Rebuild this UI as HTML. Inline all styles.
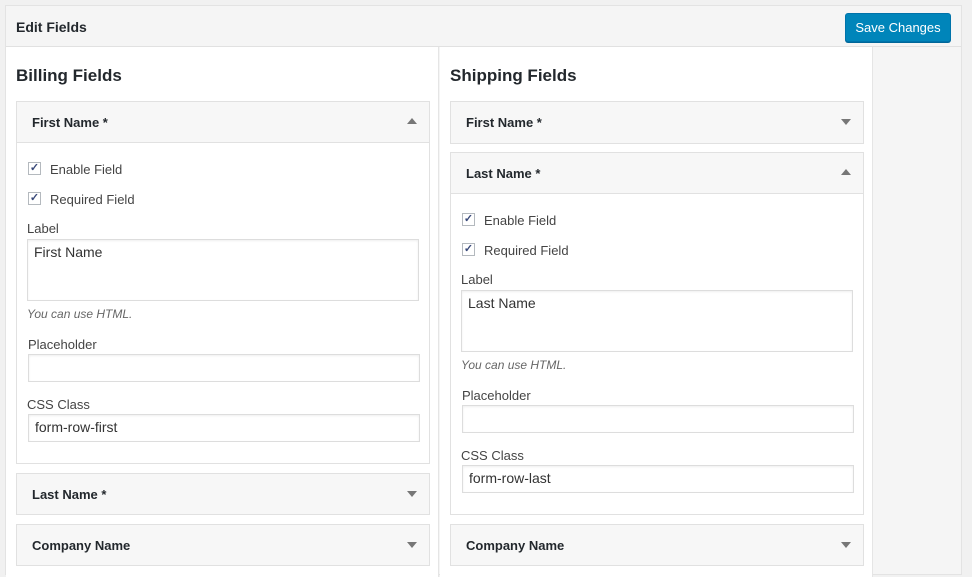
<!DOCTYPE html>
<html><head><style>
*{box-sizing:border-box;margin:0;padding:0}
body{width:972px;height:571px;overflow:hidden;background:#f1f1f1;font-family:"Liberation Sans",sans-serif;color:#23282d;position:relative}
.a{position:absolute}
.panel{left:5px;top:5px;width:957px;height:570px;border:1px solid #e3e3e3;background:#f5f5f5}
.hdr{left:6px;top:6px;width:955px;height:41px;background:#f5f5f5;border-bottom:1px solid #e1e1e1}
.col{top:47px;height:530px;background:#fff}
h2{position:absolute;font-size:17px;font-weight:bold;color:#23282d}
.box{position:absolute;border:1px solid #e1e1e1;background:#fff}
.bh{height:40px;background:#f7f7f7;font-size:13px;font-weight:bold;padding:13px 0 0 15px;position:relative}
.open .bh{border-bottom:1px solid #e1e1e1;height:41px}
.tri{position:absolute;right:12px;top:17px;width:0;height:0;border-left:5px solid transparent;border-right:5px solid transparent}
.dn{border-top:6px solid #777}
.up{border-bottom:6px solid #777;top:16px}
.t{position:absolute;font-size:13px;color:#444}
.cb{position:absolute;width:13px;height:13px;border:1px solid #b4b9be;background:#fff;font-size:11px;line-height:11px;text-align:center;color:#3a4a7a;font-weight:bold}
.inp{position:absolute;border:1px solid #ddd;background:#fff;box-shadow:inset 0 1px 2px rgba(0,0,0,.07);font-size:14px;color:#333;padding:4px 6px}
.i{font-style:italic;color:#666;font-size:12px}
.btn{left:845px;top:13px;width:106px;height:29px;background:#0085ba;border:1px solid #0073aa;border-radius:3px;color:#fff;font-size:13px;text-align:center;line-height:27px;box-shadow:0 1px 0 #006799}
</style></head><body>
<div class="a panel"></div>
<div class="a hdr"></div>
<div class="a" style="left:16px;top:19px;font-size:14px;font-weight:bold">Edit Fields</div>
<div class="a btn">Save Changes</div>
<div class="a col" style="left:6px;width:433px;border-right:1px solid #e5e5e5"></div>
<div class="a col" style="left:440px;width:433px;border-right:1px solid #e5e5e5"></div>

<h2 style="left:16px;top:66px">Billing Fields</h2>
<h2 style="left:450px;top:66px">Shipping Fields</h2>

<!-- billing -->
<div class="box open" style="left:16px;top:101px;width:414px;height:363px"><div class="bh">First Name *<span class="tri up"></span></div></div>
<div class="cb" style="left:28px;top:162px">✓</div><div class="t" style="left:50px;top:162px">Enable Field</div>
<div class="cb" style="left:28px;top:192px">✓</div><div class="t" style="left:50px;top:192px">Required Field</div>
<div class="t" style="left:27px;top:221px">Label</div>
<div class="inp" style="left:27px;top:239px;width:392px;height:62px">First Name</div>
<div class="t i" style="left:27px;top:307px">You can use HTML.</div>
<div class="t" style="left:28px;top:337px">Placeholder</div>
<div class="inp" style="left:28px;top:354px;width:392px;height:28px"></div>
<div class="t" style="left:27px;top:397px">CSS Class</div>
<div class="inp" style="left:28px;top:414px;width:392px;height:28px">form-row-first</div>
<div class="box" style="left:16px;top:473px;width:414px;height:42px"><div class="bh">Last Name *<span class="tri dn"></span></div></div>
<div class="box" style="left:16px;top:524px;width:414px;height:42px"><div class="bh">Company Name<span class="tri dn"></span></div></div>

<!-- shipping -->
<div class="box" style="left:450px;top:101px;width:414px;height:43px"><div class="bh" style="height:41px">First Name *<span class="tri dn"></span></div></div>
<div class="box open" style="left:450px;top:152px;width:414px;height:363px"><div class="bh">Last Name *<span class="tri up"></span></div></div>
<div class="cb" style="left:462px;top:213px">✓</div><div class="t" style="left:484px;top:213px">Enable Field</div>
<div class="cb" style="left:462px;top:243px">✓</div><div class="t" style="left:484px;top:243px">Required Field</div>
<div class="t" style="left:461px;top:272px">Label</div>
<div class="inp" style="left:461px;top:290px;width:392px;height:62px">Last Name</div>
<div class="t i" style="left:461px;top:358px">You can use HTML.</div>
<div class="t" style="left:462px;top:388px">Placeholder</div>
<div class="inp" style="left:462px;top:405px;width:392px;height:28px"></div>
<div class="t" style="left:461px;top:448px">CSS Class</div>
<div class="inp" style="left:462px;top:465px;width:392px;height:28px">form-row-last</div>
<div class="box" style="left:450px;top:524px;width:414px;height:42px"><div class="bh">Company Name<span class="tri dn"></span></div></div>
</body></html>
